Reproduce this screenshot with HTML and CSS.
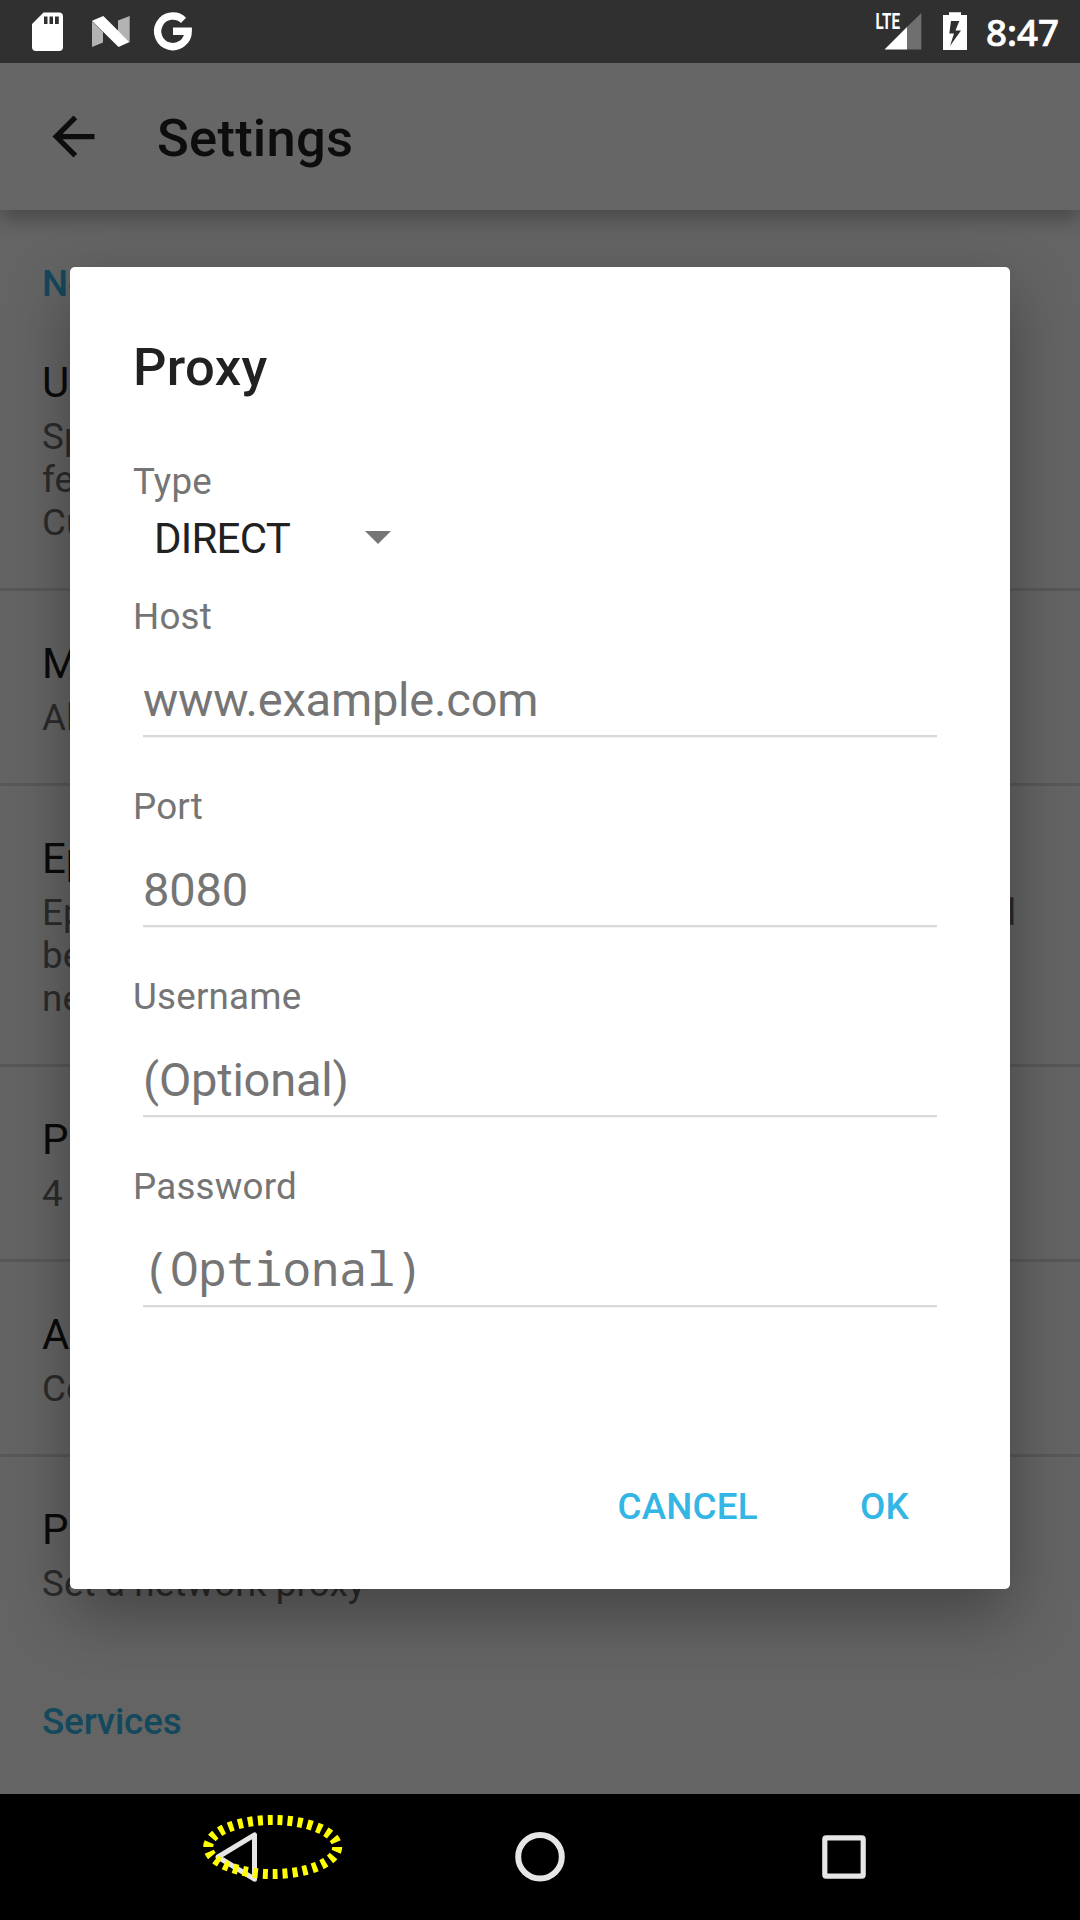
FILE: index.html
```html
<!DOCTYPE html>
<html lang="en">
<head>
<meta charset="utf-8">
<title>Settings</title>
<link rel="stylesheet" href="styles.css">
</head>
<body>
<div class="screen">
  <header class="status">
    <svg class="status-icons" width="200" height="63" viewBox="0 0 200 63">
      <path fill="#fff" fill-rule="evenodd" d="M43.500 12.500H59Q63 12.500 63 16.500V47Q63 51 59 51H36Q32 51 32 47V24ZM44 16.500V24H47.500V16.500ZM49.500 16.500V24H53V16.500ZM55 16.500V24H58.800V16.500Z"/>
      <path fill="#b3b3b3" d="M92 21L103 32V42.500L92 47ZM118 20.500L129.700 16V42L118 31Z"/>
      <path fill="#fff" d="M92 20.800L103.300 16L129.500 42L118.500 47Z"/>
      <path fill="none" stroke="#fff" stroke-width="7.400" d="M183.500 20.300A15.300 15.300 0 1 0 188.200 31.300H173"/>
    </svg>
    <svg class="status-icons" width="140" height="63" viewBox="870 0 140 63">
      <text class="lte" x="875.500" y="29" textLength="24.500" lengthAdjust="spacingAndGlyphs">LTE</text>
      <path fill="#6f6f6f" d="M907 27L921.300 13V49.500H907Z"/>
      <path fill="#fff" d="M884.500 49.500L907 27V49.500Z"/>
      <path fill="#fff" fill-rule="evenodd" d="M949 12.300H961V15H967V50H943V15H949ZM951 21L949.300 33.500H954L950 46L961 30.500H955.500L959.300 21Z"/>
    </svg>
    <span class="clock">8:47</span>
  </header>

  <main class="app">
    <div class="toolbar">
      <svg width="63" height="63" viewBox="0 0 24 24"><path fill="#212121" d="M20 11H7.830l5.590-5.590L12 4l-8 8 8 8 1.410-1.410L7.830 13H20v-2z"/></svg>
      <h1 class="toolbar-title">Settings</h1>
    </div>
    <div class="list">
      <h2 class="category">Ne</h2>
      <section class="pref first">
        <div class="pref-title">U</div>
        <div class="pref-sub">Sp<br>fe<br>Cu</div>
      </section>
      <section class="pref">
        <div class="pref-title">M</div>
        <div class="pref-sub">Al</div>
      </section>
      <section class="pref">
        <div class="pref-title">Ep</div>
        <div class="pref-sub"><div class="wide"><span>Ep</span><span>d</span></div>be<br>ne</div>
      </section>
      <section class="pref">
        <div class="pref-title">P</div>
        <div class="pref-sub">4</div>
      </section>
      <section class="pref">
        <div class="pref-title">A</div>
        <div class="pref-sub">Co</div>
      </section>
      <section class="pref">
        <div class="pref-title">P</div>
        <div class="pref-sub">Set a network proxy</div>
      </section>
      <h2 class="category services">Services</h2>
    </div>
    <div class="scrim">
      <div class="dialog">
        <h2 class="dialog-title">Proxy</h2>
        <div class="label">Type</div>
        <div class="spinner"><span>DIRECT</span><svg width="26" height="15" viewBox="0 0 26 15"><path fill="#757575" d="M0 0H26L13 13Z"/></svg></div>
        <div class="field"><div class="label">Host</div><div class="input">www.example.com</div></div>
        <div class="field"><div class="label">Port</div><div class="input">8080</div></div>
        <div class="field"><div class="label">Username</div><div class="input">(Optional)</div></div>
        <div class="field"><div class="label">Password</div><div class="input mono">(Optional)</div></div>
        <div class="actions"><span>CANCEL</span><span>OK</span></div>
      </div>
    </div>
  </main>

  <footer class="nav">
    <svg width="1080" height="126" viewBox="0 1794 1080 126" fill="none">
      <g stroke="#e6e6e6" stroke-linejoin="round">
        <path stroke-width="5" d="M218 1857L254.500 1834.800V1879.200Z"/>
        <circle cx="540" cy="1856.800" r="21.800" stroke-width="6"/>
        <rect x="824.800" y="1837.800" width="38.400" height="38.400" rx="1.500" stroke-width="5.200"/>
      </g>
      <ellipse cx="272.700" cy="1847" rx="64.500" ry="27" stroke="#ff0" stroke-width="10" stroke-dasharray="5" pathLength="300"/>
    </svg>
  </footer>
</div>
</body>
</html>
```
FILE: styles.css
```css
* { box-sizing: border-box; }
body { margin: 0; font-family: Roboto, sans-serif; color: #212121; }
h1, h2 { margin: 0; font-weight: 500; }
svg { display: block; flex: none; }

.screen { width: 1080px; height: 1920px; display: flex; flex-direction: column; overflow: hidden; }

.status { height: 63px; flex: none; background: #303030; display: flex; align-items: center; }
.status-icons:first-child { margin-right: 670px; }
.lte { font: 700 22.500px Roboto, sans-serif; fill: #fff; }
.clock { margin: 2px 0 0 -24px; font: 500 36.750px/43px "Noto Sans", sans-serif; color: #fff; -webkit-text-stroke: .7px #fff; }

.app { height: 1731px; flex: none; position: relative; background: #fafafa; overflow: hidden; }
.toolbar { height: 147px; position: relative; z-index: 1; display: flex; align-items: center; padding-left: 42px; background: #fff; box-shadow: 0 8px 20px rgba(0, 0, 0, .3); }
.toolbar-title { margin: 3px 0 0 52px; font-size: 52.500px; line-height: 62px; letter-spacing: .25px; }

.list { padding-top: 52px; white-space: nowrap; }
.category { padding-left: 42px; height: 48px; font-size: 36.750px; line-height: 43px; letter-spacing: -.15px; color: #33b5e5; }
.pref { padding: 48px 0 44px 42px; border-top: 3px solid #dcdcdc; }
.pref.first { border-top: 0; }
.pref-title { font-size: 42px; line-height: 49px; color: #1b1b1b; }
.pref-sub { margin-top: 8px; font-size: 36.750px; line-height: 43px; letter-spacing: .12px; color: #6c6c6c; }
.wide { display: flex; justify-content: space-between; width: 974px; }
.services { margin-top: 51px; }

.scrim { position: absolute; inset: 0; z-index: 2; padding: 204px 70px 205px; background: rgba(0, 0, 0, .6); }
.dialog { height: 1322px; padding: 69px 73px 0 63px; border-radius: 5px; background: #fff; box-shadow: 0 24px 64px rgba(0, 0, 0, .33); }
.dialog-title { margin-bottom: 62px; font-size: 52.500px; line-height: 62px; letter-spacing: .35px; }
.label { font-size: 36.750px; line-height: 43px; letter-spacing: .2px; color: #757575; }
.spinner { display: flex; align-items: center; width: 258px; justify-content: space-between; margin: 11px 0 32px; padding-left: 21px; font-size: 42px; line-height: 49px; letter-spacing: -.75px; }
.field { margin-bottom: 48px; }
.input { margin: 34px 0 0 10px; height: 65px; border-bottom: 2px solid #d9d9d9; box-shadow: 0 1px #f3f3f3; font-size: 47px; line-height: 55px; letter-spacing: -.2px; color: #757575; }
.mono { font-family: "Noto Sans Mono", "Liberation Mono", monospace; line-height: 53px; letter-spacing: -.05px; text-indent: -1px; }
.actions { display: flex; justify-content: flex-end; gap: 102px; margin-top: 178px; padding-right: 28px; font-size: 36.750px; line-height: 43px; font-weight: 500; letter-spacing: .25px; color: #33b5e5; }

.nav { height: 126px; flex: none; background: #000; }
```
